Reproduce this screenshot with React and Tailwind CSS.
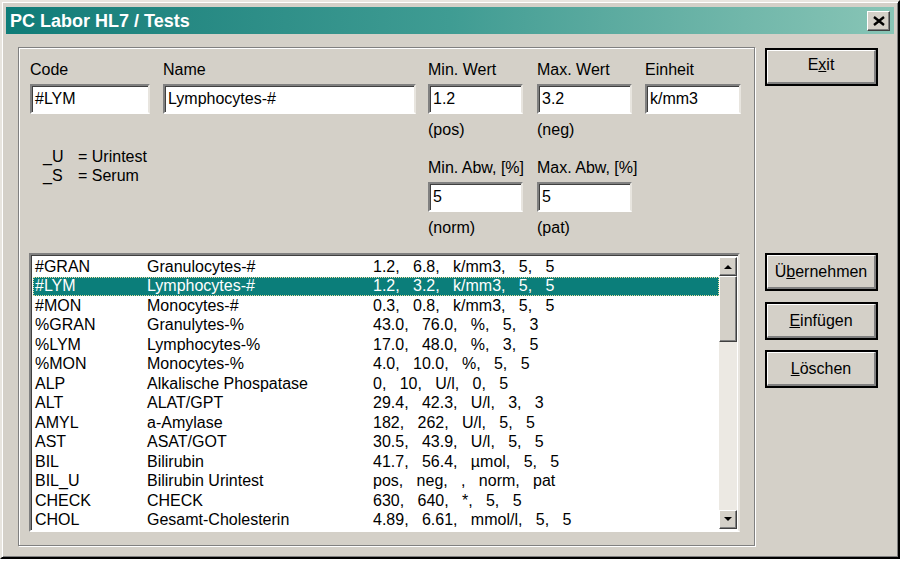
import React from 'react';

const rows = [
  ['#GRAN', 'Granulocytes-#', '1.2,   6.8,   k/mm3,   5,   5'],
  ['#LYM', 'Lymphocytes-#', '1.2,   3.2,   k/mm3,   5,   5'],
  ['#MON', 'Monocytes-#', '0.3,   0.8,   k/mm3,   5,   5'],
  ['%GRAN', 'Granulytes-%', '43.0,   76.0,   %,   5,   3'],
  ['%LYM', 'Lymphocytes-%', '17.0,   48.0,   %,   3,   5'],
  ['%MON', 'Monocytes-%', '4.0,   10.0,   %,   5,   5'],
  ['ALP', 'Alkalische Phospatase', '0,   10,   U/l,   0,   5'],
  ['ALT', 'ALAT/GPT', '29.4,   42.3,   U/l,   3,   3'],
  ['AMYL', 'a-Amylase', '182,   262,   U/l,   5,   5'],
  ['AST', 'ASAT/GOT', '30.5,   43.9,   U/l,   5,   5'],
  ['BIL', 'Bilirubin', '41.7,   56.4,   µmol,   5,   5'],
  ['BIL_U', 'Bilirubin Urintest', 'pos,   neg,   ,   norm,   pat'],
  ['CHECK', 'CHECK', '630,   640,   *,   5,   5'],
  ['CHOL', 'Gesamt-Cholesterin', '4.89,   6.61,   mmol/l,   5,   5'],
];

// sunken edit box
const Field = ({ value, width }) => (
  <div
    className={`${width} h-[30px] flex items-center pl-[3px] bg-white border-2 border-t-[#808080] border-l-[#808080] border-b-white border-r-[#e8e5df] shadow-[inset_1px_1px_0_#404040]`}
  >
    {value}
  </div>
);

const Button = ({ children, className }) => (
  <div className={`w-[113px] h-[38px] border-2 border-black ${className}`}>
    <div className="w-full h-full flex items-center justify-center border-t border-l border-t-white border-l-white border-b-2 border-r-2 border-b-[#808080] border-r-[#808080]">
      {children}
    </div>
  </div>
);

const Arrow = ({ up }) => (
  <div className="w-[18px] h-[19px] flex items-center justify-center bg-[#d4d0c8] border border-t-white border-l-white border-b-[#404040] border-r-[#404040] shadow-[inset_-1px_-1px_0_#808080]">
    <svg width="8" height="5" viewBox="0 0 8 5">
      {up ? <path d="M0 5 L4 1 L8 5 Z" fill="black" /> : <path d="M0 0 L8 0 L4 4 Z" fill="black" />}
    </svg>
  </div>
);

export default function App() {
  return (
    <div className="w-[902px] h-[561px] bg-white font-['Liberation_Sans',Arial,sans-serif] text-[16px] text-black">
      <div className="w-[900px] h-[559px] flex flex-col bg-[#d4d0c8] border-t-2 border-l-2 border-t-[#e8e5df] border-l-[#e8e5df] border-b-2 border-r-2 border-b-black border-r-black p-[4px] shadow-[inset_1px_1px_0_white,inset_-1px_-1px_0_#808080]">
        {/* title bar */}
        <div className="h-[27px] mt-[1px] flex items-center justify-between pl-[4px] pr-[4px] bg-gradient-to-r from-[#0e7c78] via-[#3f9c93] to-[#88c5b6]">
          <span className="text-white font-bold text-[18px] leading-none">PC Labor HL7 / Tests</span>
          <div className="w-[23px] h-[20px] flex items-center justify-center bg-[#d4d0c8] border border-t-white border-l-white border-b-[#404040] border-r-[#404040] shadow-[inset_-1px_-1px_0_#808080]">
            <svg width="12" height="10" viewBox="0 0 12 10">
              <path d="M1 1 L11 9 M11 1 L1 9" stroke="black" strokeWidth="2.4" />
            </svg>
          </div>
        </div>

        <div className="flex">
          {/* group box */}
          <div className="ml-[12px] mt-[13px] w-[737px] h-[499px] border border-[#808080] shadow-[inset_1px_1px_0_white,1px_1px_0_white] pl-[11px] pt-[13px]">
            <div className="flex">
              <div className="w-[120px]">
                <div className="h-[18px] leading-[18px] mb-[5px]">Code</div>
                <Field value="#LYM" width="w-[120px]" />
              </div>
              <div className="w-[253px] ml-[13px]">
                <div className="h-[18px] leading-[18px] mb-[5px]">Name</div>
                <Field value="Lymphocytes-#" width="w-[253px]" />
              </div>
              <div className="w-[95px] ml-[12px]">
                <div className="h-[18px] leading-[18px] mb-[5px]">Min. Wert</div>
                <Field value="1.2" width="w-[95px]" />
              </div>
              <div className="w-[95px] ml-[14px]">
                <div className="h-[18px] leading-[18px] mb-[5px]">Max. Wert</div>
                <Field value="3.2" width="w-[95px]" />
              </div>
              <div className="w-[96px] ml-[13px]">
                <div className="h-[18px] leading-[18px] mb-[5px]">Einheit</div>
                <Field value="k/mm3" width="w-[96px]" />
              </div>
            </div>

            <div className="flex mt-[7px]">
              <div className="w-[398px] pl-[13px] pt-[26px] leading-[19px]">
                <div className="flex whitespace-pre"><span className="w-[35px]">_U</span><span>= Urintest</span></div>
                <div className="flex whitespace-pre"><span className="w-[35px]">_S</span><span>= Serum</span></div>
              </div>
              <div>
                <div className="flex leading-[18px]">
                  <span className="w-[109px]">(pos)</span>
                  <span>(neg)</span>
                </div>
                <div className="flex leading-[18px] mt-[20px] mb-[5px]">
                  <span className="w-[109px]">Min. Abw, [%]</span>
                  <span>Max. Abw, [%]</span>
                </div>
                <div className="flex">
                  <Field value="5" width="w-[95px]" />
                  <div className="ml-[14px]">
                    <Field value="5" width="w-[95px]" />
                  </div>
                </div>
                <div className="flex leading-[18px] mt-[7px]">
                  <span className="w-[109px]">(norm)</span>
                  <span>(pat)</span>
                </div>
              </div>
            </div>

            {/* list box */}
            <div className="mt-[16px] -ml-[1px] w-[711px] h-[279px] flex bg-white border-2 border-t-[#808080] border-l-[#808080] border-b-white border-r-[#e8e5df] shadow-[inset_1px_1px_0_#404040]">
              <div className="flex-1 pt-[2px] pl-[2px]">
                {rows.map(([code, name, vals], i) => (
                  <div
                    key={code}
                    className={`h-[19.5px] flex items-center whitespace-pre pl-[2px] ${
                      i === 1 ? 'bg-[#0b7e7a] text-white outline outline-1 outline-dotted outline-[#e8e0a0] -outline-offset-1' : ''
                    }`}
                  >
                    <span className="w-[112px]">{code}</span>
                    <span className="w-[226px]">{name}</span>
                    <span>{vals}</span>
                  </div>
                ))}
              </div>
              <div className="w-[18px] mt-[2px] mb-[1px] mr-[1px] flex flex-col bg-[#ece9e3]">
                <Arrow up />
                <div className="h-[66px] bg-[#d4d0c8] border border-t-white border-l-white border-b-[#404040] border-r-[#404040] shadow-[inset_-1px_-1px_0_#808080]" />
                <div className="flex-1" />
                <Arrow />
              </div>
            </div>
          </div>

          {/* buttons */}
          <div className="ml-[10px] mt-[14px] flex flex-col">
            <Button>
              <span className="-mt-[3px]">E<span className="underline">x</span>it</span>
            </Button>
            <Button className="mt-[167px]">
              <span>Ü<span className="underline">b</span>ernehmen</span>
            </Button>
            <Button className="mt-[11px]">
              <span><span className="underline">E</span>infügen</span>
            </Button>
            <Button className="mt-[10px]">
              <span><span className="underline">L</span>öschen</span>
            </Button>
          </div>
        </div>
      </div>
    </div>
  );
}
